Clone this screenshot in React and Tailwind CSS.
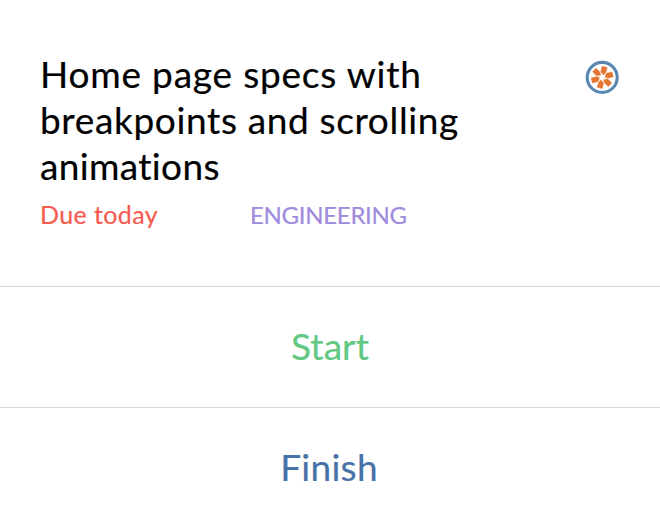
const petals = [15, 75, 135, 195, 255, 315];

function AssigneeIcon() {
  return (
    <svg className="h-[34px] w-[34px] shrink-0" viewBox="0 0 34 34" fill="none">
      <circle cx="17.2" cy="17.4" r="15" stroke="#5a87b0" strokeWidth="3.1" />
      {petals.map((angle) => (
        <path key={angle} d="M14.4 6.6H19.4V11.6L17.9 14.6L14.4 12.4Z" fill="#e57632" stroke="#e57632" strokeWidth="0.5" transform={`rotate(${angle} 17.2 17.4)`} />
      ))}
    </svg>
  );
}

export default function App() {
  return (
    <main className="h-[528px] w-[660px] overflow-hidden bg-white font-['Lato',sans-serif]">
      <section className="h-[286px] pl-10 pr-[41px] pt-[51px]">
        <div className="flex justify-between">
          <h1 className="whitespace-nowrap text-[37px] font-normal leading-[46px] text-black [-webkit-text-stroke:0.2px_currentColor]">
            <span className="block tracking-[0.8px]">Home page specs with</span>
            <span className="block tracking-[0.65px]">breakpoints and scrolling</span>
            <span className="block tracking-[0.35px]">animations</span>
          </h1>
          <div className="pt-[9px]">
            <AssigneeIcon />
          </div>
        </div>
        <div className="mt-[11px] flex items-start text-[24px] leading-[30px] [-webkit-text-stroke:0.2px_currentColor]">
          <span className="w-[210px] text-[25px] leading-[28px] tracking-[0.4px] text-[#f65b4f]">Due today</span>
          <span className="tracking-[-0.3px] text-[#a18bdc]">ENGINEERING</span>
        </div>
      </section>
      <button className="flex h-[121px] w-full items-center justify-center border-t border-[#d5d5df] pb-0.5 text-[37px] leading-[46px] tracking-[0.1px] text-[#62c882] [-webkit-text-stroke:0.2px_currentColor]">
        Start
      </button>
      <button className="flex h-[121px] w-full items-center justify-center border-t border-[#d5d5df] pb-0.5 pr-0.5 text-[37px] leading-[46px] tracking-[0.3px] text-[#4672a8] [-webkit-text-stroke:0.2px_currentColor]">
        Finish
      </button>
    </main>
  );
}
